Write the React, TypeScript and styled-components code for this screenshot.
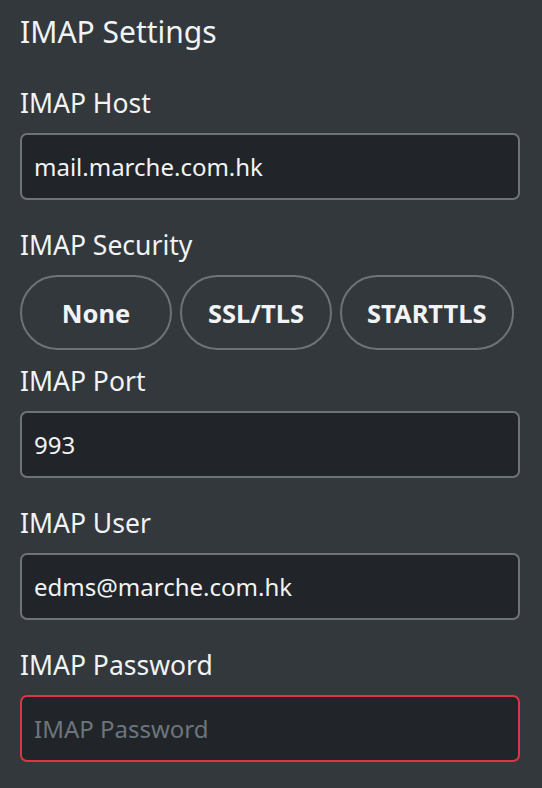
import React, { useState } from 'react'
import styled, { createGlobalStyle } from 'styled-components'

const colors = {
  page: '#33383d',
  field: '#212529',
  border: '#6e7378',
  text: '#f1f3f5',
  muted: '#6c757d',
  danger: '#dc3545',
}

const GlobalStyle = createGlobalStyle`
  html, body {
    margin: 0;
    background: ${ colors.page };
  }
  body {
    font-family: "Noto Sans", "Open Sans", sans-serif;
    color: ${ colors.text };
  }
  * { box-sizing: border-box; }
`

const Page = styled.section`
  min-height: 788px;
  padding: 11px 22px 20px 20px;
`

const Title = styled.h2`
  margin: 0 0 32px;
  font-size: 30px;
  line-height: 42px;
  font-weight: 400;
`

const Group = styled.div<{ $space: number }>`
  margin-bottom: ${ p => p.$space }px;
`

const Label = styled.label`
  display: block;
  margin-bottom: 12px;
  font-size: 26.5px;
  line-height: 36px;
`

const Input = styled.input<{ $invalid?: boolean }>`
  display: block;
  width: 100%;
  height: 67px;
  padding: 0 12px;
  font: inherit;
  font-size: 24px;
  color: ${ colors.text };
  background: ${ colors.field };
  border: 2px solid ${ p => p.$invalid ? colors.danger : colors.border };
  border-radius: 7px;
  outline: none;
  &::placeholder {
    color: ${ colors.muted };
  }
`

const Options = styled.div`
  display: flex;
  gap: 8px;
`

const Option = styled.button<{ $active?: boolean }>`
  height: 75px;
  min-width: 152px;
  padding: 0 25px;
  font-family: inherit;
  font-size: 25.5px;
  font-weight: 700;
  color: ${ colors.text };
  background: ${ p => p.$active ? '#495057' : 'transparent' };
  border: 2px solid ${ colors.border };
  border-radius: 38px;
  cursor: pointer;
`

const securityOptions = ['None', 'SSL/TLS', 'STARTTLS']

const App = () => {
  const [security, setSecurity] = useState('')

  return (
    <Page>
      <GlobalStyle />
      <Title>IMAP Settings</Title>
      <Group $space={ 27 }>
        <Label>IMAP Host</Label>
        <Input defaultValue="mail.marche.com.hk" />
      </Group>
      <Group $space={ 13 }>
        <Label>IMAP Security</Label>
        <Options>
          { securityOptions.map(item => (
            <Option key={ item } $active={ security === item } onClick={ () => setSecurity(item) }>
              { item }
            </Option>
          )) }
        </Options>
      </Group>
      <Group $space={ 27 }>
        <Label>IMAP Port</Label>
        <Input defaultValue="993" />
      </Group>
      <Group $space={ 27 }>
        <Label>IMAP User</Label>
        <Input defaultValue="edms@marche.com.hk" />
      </Group>
      <Group $space={ 0 }>
        <Label>IMAP Password</Label>
        <Input type="password" placeholder="IMAP Password" $invalid />
      </Group>
    </Page>
  )
}

export default App
